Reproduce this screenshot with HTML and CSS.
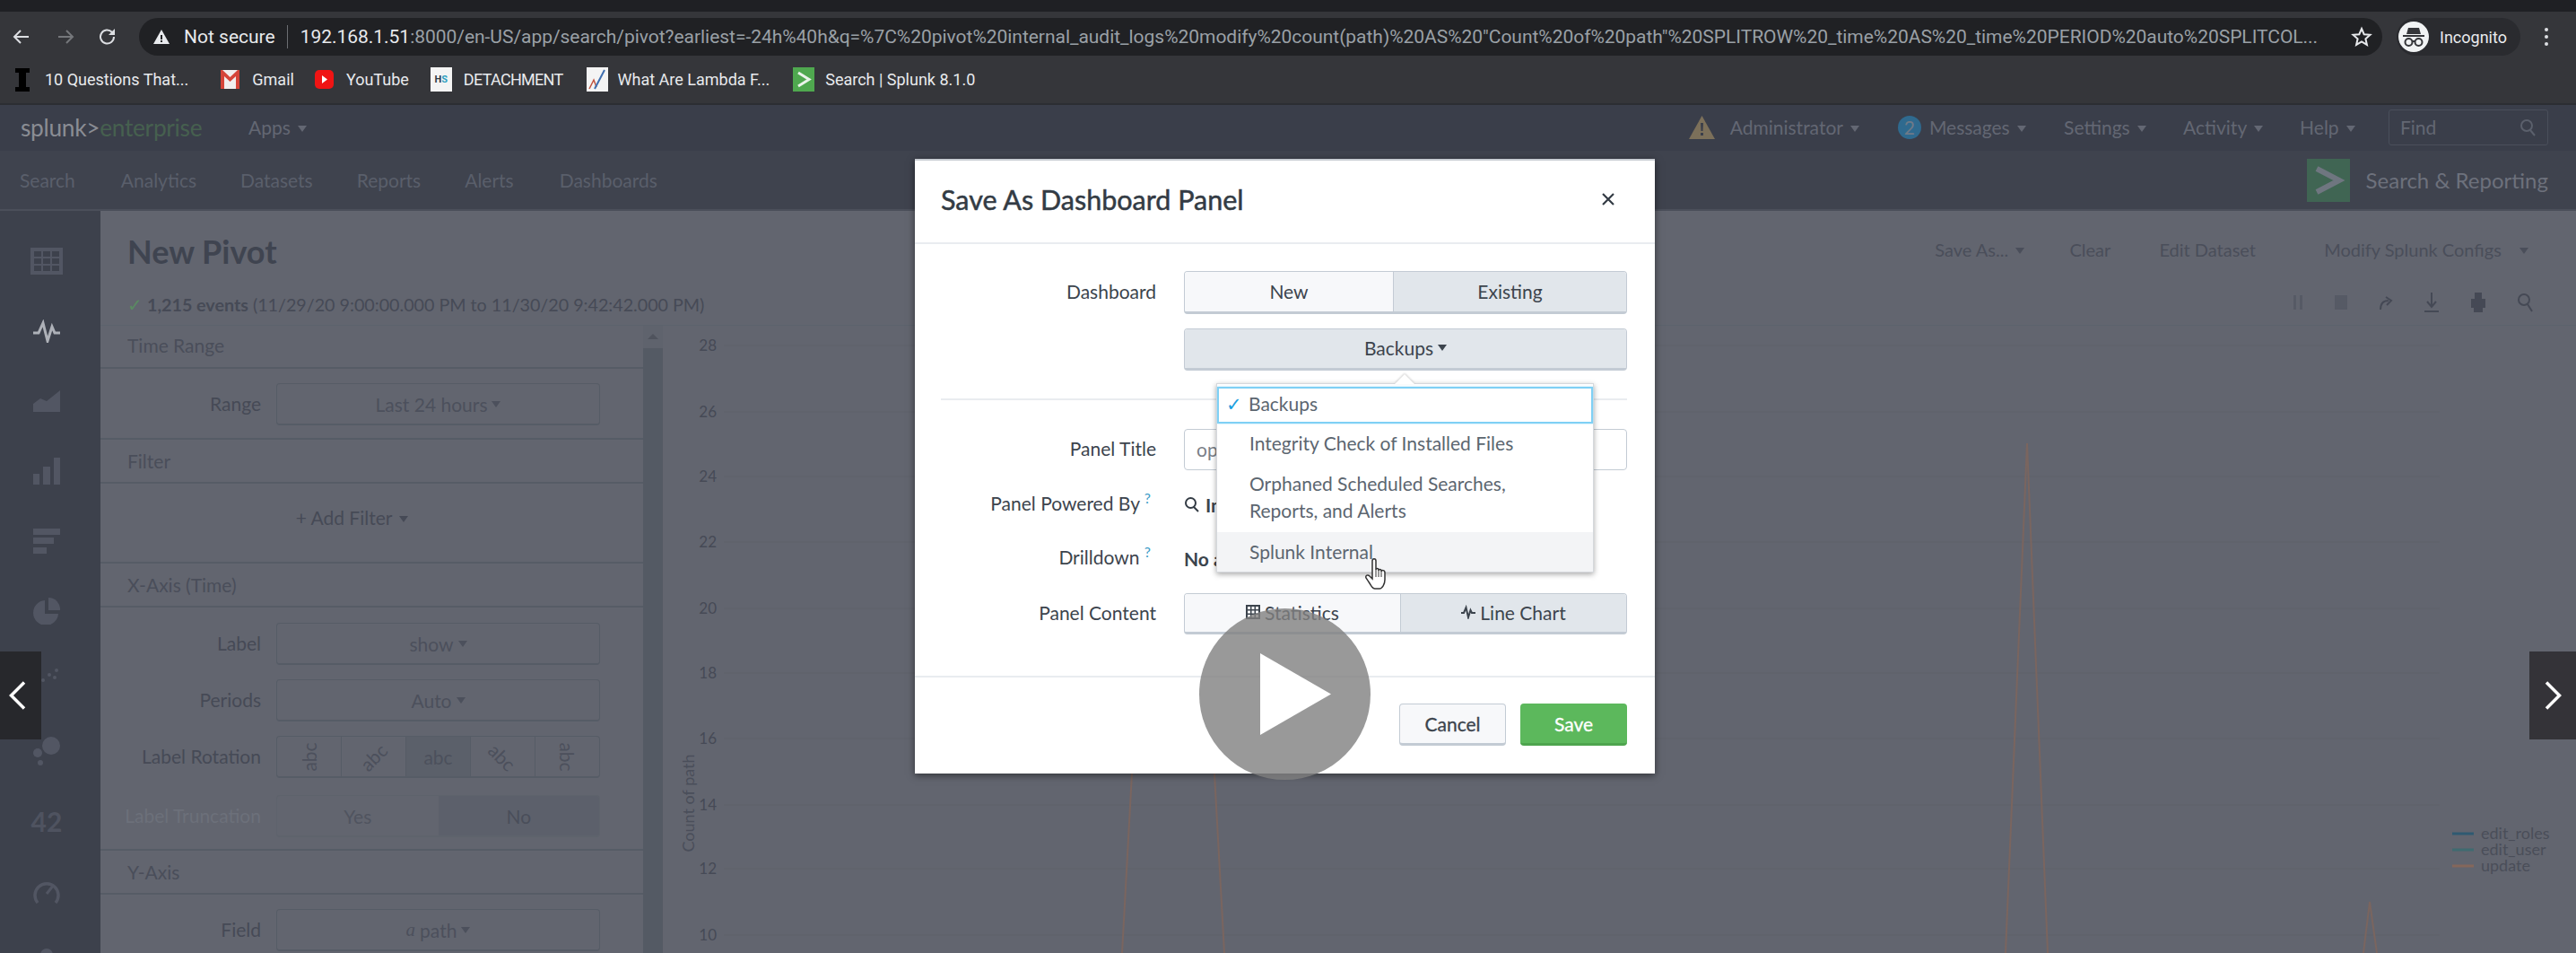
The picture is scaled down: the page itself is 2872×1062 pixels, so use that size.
FILE: index.html
```html
<!DOCTYPE html>
<html lang="en">
<head>
    <meta charset="UTF-8">
    <title>Save As Dashboard Panel</title>
    <link rel="stylesheet" href="styles.css">
</head>
<body>

    <div class="tabstrip"></div>

    <!-- Browser toolbar -->
    <div class="toolbar">
        <svg class="nav-btn" width="22" height="22" viewBox="0 0 22 22"><path d="M19 11H4M10 4l-7 7 7 7" fill="none" stroke="#dcdee2" stroke-width="2"/></svg>
        <svg class="nav-btn nav-forward" width="22" height="22" viewBox="0 0 22 22"><path d="M3 11h15M12 4l7 7-7 7" fill="none" stroke="#75777b" stroke-width="2"/></svg>
        <svg class="nav-btn nav-reload" width="22" height="22" viewBox="0 0 22 22"><path d="M18 11a7.5 7.5 0 1 1-2.2-5.3L18 8" fill="none" stroke="#dcdee2" stroke-width="2"/><path d="M19 2v7h-7z" fill="#dcdee2"/></svg>
        <div class="omnibox">
            <svg width="20" height="18" viewBox="0 0 20 18"><path d="M10 1l9 16H1z" fill="#e8eaed"/><path d="M9 7h2v5H9zM9 13h2v2H9z" fill="#202124"/></svg>
            <span class="not-secure">Not secure</span>
            <span class="url"><b>192.168.1.51</b>:8000/en-US/app/search/pivot?earliest=-24h%40h&amp;q=%7C%20pivot%20internal_audit_logs%20modify%20count(path)%20AS%20"Count%20of%20path"%20SPLITROW%20_time%20AS%20_time%20PERIOD%20auto%20SPLITCOL...</span>
            <svg class="star" width="24" height="24" viewBox="0 0 24 24"><path d="M12 3l2.7 6.2 6.8.6-5.1 4.5 1.5 6.6-5.9-3.5-5.9 3.5 1.5-6.6-5.1-4.5 6.8-.6z" fill="none" stroke="#e8eaed" stroke-width="2"/></svg>
        </div>
        <div class="profile">
            <svg width="34" height="34" viewBox="0 0 34 34"><circle cx="17" cy="17" r="17" fill="#f1f3f4"/><path d="M11 7h12l2 7H9z" fill="#35363a"/><path d="M5 15h24v2H5z" fill="#35363a"/><circle cx="11.5" cy="23" r="4" fill="none" stroke="#35363a" stroke-width="2"/><circle cx="22.5" cy="23" r="4" fill="none" stroke="#35363a" stroke-width="2"/><path d="M15 22h4" stroke="#35363a" stroke-width="2"/></svg>
            <span>Incognito</span>
        </div>
        <div class="kebab"><i></i><i></i><i></i></div>
    </div>

    <!-- Bookmarks -->
    <div class="bookmarks">
        <a class="bookmark bm-first"><svg width="16" height="26" viewBox="0 0 16 26"><path d="M0 0h16v5h-4v16h4v5H0v-5h4V5H0z" fill="#000"/></svg>10 Questions That...</a>
        <a class="bookmark bm-gmail"><svg width="21" height="25" viewBox="0 0 21 25"><path d="M0 2h21v21H0z" fill="#f1eeee"/><path d="M0 2v21h4V9l6.500 6L17 9v14h4V2h-2l-8.500 8L2 2z" fill="#d5453a"/></svg>Gmail</a>
        <a class="bookmark bm-youtube"><svg width="21" height="25" viewBox="0 0 21 25"><rect y="2" width="21" height="21" rx="5" fill="#f01414"/><path d="M8 8l6 4.500-6 4.500z" fill="#fff"/></svg>YouTube</a>
        <a class="bookmark bm-hs"><span class="hs-icon">H<em>S</em></span><span class="bm-narrow">DETACHMENT</span></a>
        <a class="bookmark bm-lambda"><svg width="24" height="27" viewBox="0 0 24 27"><path d="M0 0h24v27H0z" fill="#f4f4f4"/><path d="M3 24l5-10 3 8" fill="none" stroke="#c0533f" stroke-width="1.500"/><path d="M9 24L20 3" fill="none" stroke="#3f6fb0" stroke-width="2"/></svg>What Are Lambda F...</a>
        <a class="bookmark bm-search"><svg width="24" height="27" viewBox="0 0 24 27"><path d="M0 0h24v27H0z" fill="#4fa84f"/><path d="M6 6l12 7.500L6 21" fill="none" stroke="#eaf3ea" stroke-width="3"/></svg>Search | Splunk 8.1.0</a>
    </div>

    <!-- Splunk bar -->
    <div class="splunk-bar">
        <span class="logo">splunk&gt;<em>enterprise</em></span>
        <a class="apps">Apps <i class="caret"></i></a>
        <div class="splunk-right">
            <svg class="warn" width="29" height="26" viewBox="0 0 29 26"><path d="M14.500 0L29 26H0z" fill="#7c705a"/><path d="M13 8h3l-.5 9h-2zM13 19h3v3h-3z" fill="#3a3e4a"/></svg>
            <a class="bar-link link-admin">Administrator <i class="caret"></i></a>
            <span class="badge">2</span>
            <a class="bar-link link-messages">Messages <i class="caret"></i></a>
            <a class="bar-link link-settings">Settings <i class="caret"></i></a>
            <a class="bar-link link-activity">Activity <i class="caret"></i></a>
            <a class="bar-link link-help">Help <i class="caret"></i></a>
            <div class="find">
                <span>Find</span>
                <svg width="20" height="20" viewBox="0 0 20 20"><circle cx="8" cy="8" r="6" fill="none" stroke="#5b606c" stroke-width="2"/><path d="M12 13l5 6" stroke="#5b606c" stroke-width="2"/></svg>
            </div>
        </div>
    </div>

    <!-- App bar -->
    <div class="app-bar">
        <a class="tab tab-search">Search</a>
        <a class="tab tab-analytics">Analytics</a>
        <a class="tab tab-datasets">Datasets</a>
        <a class="tab tab-reports">Reports</a>
        <a class="tab tab-alerts">Alerts</a>
        <a class="tab">Dashboards</a>
        <div class="app-name">
            <svg width="48" height="48" viewBox="0 0 48 48"><path d="M0 0h48v48H0z" fill="#406553"/><path d="M11 11l25 13-25 13" fill="none" stroke="#6f7680" stroke-width="6"/></svg>
            <span>Search &amp; Reporting</span>
        </div>
    </div>

    <div class="main">
        <!-- Chart type sidebar -->
        <div class="sidebar">
            <div class="side-item"><svg width="36" height="30" viewBox="0 0 36 30"><path fill-rule="evenodd" d="M0 0h36v30H0zM4 4v6h8V4zm10 0v6h8V4zm10 0v6h8V4zM4 12v6h8v-6zm10 0v6h8v-6zm10 0v6h8v-6zM4 20v6h8v-6zm10 0v6h8v-6zm10 0v6h8v-6z" fill="#525663"/></svg></div>
            <div class="side-item"><svg width="32" height="26" viewBox="0 0 32 26"><path d="M1 15h6l5-11 5 20 5-16 3 7h6" fill="none" stroke="#aeb1b8" stroke-width="3"/></svg></div>
            <div class="side-item"><svg width="30" height="24" viewBox="0 0 30 24"><path d="M0 24V15l8-6 7 3L30 0v24z" fill="#525663"/></svg></div>
            <div class="side-item"><svg width="30" height="30" viewBox="0 0 30 30"><path d="M0 18h7v12H0zM11 10h8v20h-8zM23 0h7v30h-7z" fill="#525663"/></svg></div>
            <div class="side-item"><svg width="30" height="28" viewBox="0 0 30 28"><path d="M0 0h30v7H0zM0 10h23v7H0zM0 21h15v7H0z" fill="#525663"/></svg></div>
            <div class="side-item"><svg width="30" height="30" viewBox="0 0 30 30"><path d="M13 3v15h15A14 14 0 1 1 13 3z" fill="#525663"/><path d="M17 0a13 13 0 0 1 13 14H17z" fill="#525663"/></svg></div>
            <div class="side-item"><svg width="30" height="30" viewBox="0 0 30 30"><g fill="#525663"><circle cx="11" cy="14" r="2"/><circle cx="18" cy="8" r="2"/><circle cx="26" cy="3" r="2"/><circle cx="24" cy="11" r="2"/><circle cx="5" cy="22" r="2"/></g></svg></div>
            <div class="side-item"><svg width="30" height="32" viewBox="0 0 30 32"><g fill="#525663"><circle cx="20" cy="10" r="10"/><circle cx="5" cy="18" r="5"/><circle cx="8" cy="29" r="3"/></g></svg></div>
            <div class="side-item side-num">42</div>
            <div class="side-item"><svg width="30" height="28" viewBox="0 0 30 28"><path d="M5 27A13 13 0 1 1 25 27" fill="none" stroke="#525663" stroke-width="3.500"/><path d="M15 17l8-10" stroke="#525663" stroke-width="3"/></svg></div>
            <div class="side-item"><svg width="30" height="30" viewBox="0 0 30 30"><circle cx="15" cy="8" r="7" fill="#525663"/></svg></div>
        </div>

        <div class="content">
            <!-- Title row -->
            <div class="page-head">
                <h1>New Pivot</h1>
                <div class="head-actions">
                    <a class="act-save">Save As... <i class="caret"></i></a>
                    <a class="act-clear">Clear</a>
                    <a class="act-edit">Edit Dataset</a>
                    <a>Modify Splunk Configs <i class="caret caret-far"></i></a>
                </div>
            </div>
            <div class="status-row">
                <div class="events"><span class="tick">✓</span> <b>1,215 events</b> (11/29/20 9:00:00.000 PM to 11/30/20 9:42:42.000 PM)</div>
                <div class="job-icons">
                    <svg width="12" height="20" viewBox="0 0 12 20"><path d="M1 2h3v16H1zM8 2h3v16H8z" fill="#565a65"/></svg>
                    <svg width="16" height="20" viewBox="0 0 16 20"><path d="M1 2h14v16H1z" fill="#565a65"/></svg>
                    <svg width="16" height="20" viewBox="0 0 16 20"><path d="M2 18c0-7 3-10 9-10M8 4l6 4-5 5" fill="none" stroke="#454955" stroke-width="2"/></svg>
                    <svg width="18" height="24" viewBox="0 0 18 24"><path d="M9 1v15M4 11l5 6 5-6M1 22h16" fill="none" stroke="#454955" stroke-width="2"/></svg>
                    <svg width="18" height="24" viewBox="0 0 18 24"><path d="M5 1h8v7h4v10h-3v5H4v-5H1V8h4z" fill="#454955"/></svg>
                    <svg width="18" height="24" viewBox="0 0 18 24"><circle cx="8" cy="9" r="6" fill="none" stroke="#454955" stroke-width="2"/><path d="M12 14l5 8" stroke="#454955" stroke-width="2"/></svg>
                </div>
            </div>

            <div class="workspace">
                <!-- Settings panel -->
                <div class="panel">
                    <div class="section-title title-first">Time Range</div>
                    <div class="section-body">
                        <div class="field"><label>Range</label><div class="select">Last 24 hours <i class="caret"></i></div></div>
                    </div>
                    <div class="section-title">Filter</div>
                    <div class="section-body body-filter"><a>+ Add Filter <i class="caret"></i></a></div>
                    <div class="section-title">X-Axis (Time)</div>
                    <div class="section-body body-x">
                        <div class="field"><label>Label</label><div class="select">show <i class="caret"></i></div></div>
                        <div class="field"><label>Periods</label><div class="select">Auto <i class="caret"></i></div></div>
                        <div class="field">
                            <label>Label Rotation</label>
                            <div class="select rotation">
                                <span><i class="rot-m90">abc</i></span>
                                <span><i class="rot-m45">abc</i></span>
                                <span class="rot-on"><i>abc</i></span>
                                <span><i class="rot-45">abc</i></span>
                                <span><i class="rot-90">abc</i></span>
                            </div>
                        </div>
                        <div class="field field-off">
                            <label>Label Truncation</label>
                            <div class="select truncation"><span>Yes</span><span class="trunc-on">No</span></div>
                        </div>
                    </div>
                    <div class="section-title">Y-Axis</div>
                    <div class="section-body">
                        <div class="field"><label>Field</label><div class="select"><em class="type-a">a</em> path <i class="caret"></i></div></div>
                    </div>
                </div>
                <div class="scrollbar"><div class="scroll-up"><i></i></div><div class="scroll-track"></div></div>

                <!-- Chart -->
                <svg class="chart" viewBox="739 362 2133 700">
                    <g stroke="#5e626b" stroke-width="1">
                        <path d="M807 385H2720M807 459H2720M807 531H2720M807 604H2720M807 678H2720M807 750H2720M807 823H2720M807 897H2720M807 968H2720M807 1042H2720"/>
                    </g>
                    <g class="chart-tick" text-anchor="end">
                        <text x="799" y="391">28</text><text x="799" y="465">26</text><text x="799" y="537">24</text><text x="799" y="610">22</text><text x="799" y="684">20</text>
                        <text x="799" y="756">18</text><text x="799" y="829">16</text><text x="799" y="903">14</text><text x="799" y="974">12</text><text x="799" y="1048">10</text>
                    </g>
                    <text class="chart-axis" text-anchor="middle" transform="translate(774 895) rotate(-90)">Count of path</text>
                    <g fill="none" stroke="#7a655f" stroke-width="2">
                        <path d="M1251 1062L1262 862M1365 1062L1354 862"/>
                        <path d="M2236 1062L2260 494L2283 1062"/>
                        <path d="M2635 1062L2642 1005L2650 1062"/>
                    </g>
                    <g stroke-width="3">
                        <path d="M2734 929h24" stroke="#2f5a72"/>
                        <path d="M2734 947h24" stroke="#3f6b70"/>
                        <path d="M2734 965h24" stroke="#84675b"/>
                    </g>
                    <g class="chart-legend">
                        <text x="2766" y="935">edit_roles</text><text x="2766" y="953">edit_user</text><text x="2766" y="971">update</text>
                    </g>
                </svg>
            </div>
        </div>
    </div>

    <!-- Modal -->
    <div class="modal">
        <div class="modal-head">
            <h2>Save As Dashboard Panel</h2>
            <svg width="16" height="16" viewBox="0 0 16 16"><path d="M2 2l12 12M14 2L2 14" stroke="#333b44" stroke-width="2.200"/></svg>
        </div>
        <div class="modal-body">
            <div class="form-row row-seg">
                <label>Dashboard</label>
                <div class="seg">
                    <span class="seg-off seg-new">New</span>
                    <span class="seg-on">Existing</span>
                </div>
            </div>
            <div class="form-row row-backups">
                <label></label>
                <div class="seg"><span class="seg-on">Backups <i class="caret"></i></span></div>
            </div>
            <div class="rule"></div>
            <div class="form-row row-title">
                <label>Panel Title</label>
                <div class="text-input">op</div>
            </div>
            <div class="form-row row-text">
                <label class="label-help">Panel Powered By <sup>?</sup></label>
                <div class="plain"><svg width="18" height="18" viewBox="0 0 18 18"><circle cx="7.500" cy="7.500" r="5.500" fill="none" stroke="#333b44" stroke-width="2"/><path d="M11 12l5 5" stroke="#333b44" stroke-width="2"/></svg><b>In</b></div>
            </div>
            <div class="form-row row-text">
                <label class="label-help">Drilldown <sup>?</sup></label>
                <div class="plain"><b>No a</b></div>
            </div>
            <div class="form-row row-content">
                <label>Panel Content</label>
                <div class="seg">
                    <span class="seg-off seg-stats"><svg width="16" height="16" viewBox="0 0 16 16"><path fill-rule="evenodd" d="M0 0h16v16H0zM2 2v3h3V2zm4.500 0v3h3V2zM11 2v3h3V2zM2 6.500v3h3v-3zm4.500 0v3h3v-3zm4.500 0v3h3v-3zM2 11v3h3v-3zm4.500 0v3h3v-3zm4.500 0v3h3v-3z" fill="#3c444d"/></svg>Statistics</span>
                    <span class="seg-on"><svg width="16" height="16" viewBox="0 0 16 16"><path d="M0 9h3l2.500-6 2.500 11 2.500-8 1.500 3h4" fill="none" stroke="#3c444d" stroke-width="2"/></svg>Line Chart</span>
                </div>
            </div>
        </div>
        <div class="modal-foot">
            <button class="btn btn-cancel">Cancel</button>
            <button class="btn btn-save">Save</button>
        </div>

        <!-- Dashboard dropdown -->
        <div class="dropdown">
            <div class="dropdown-arrow"></div>
            <div class="option option-focus"><span class="check">✓</span>Backups</div>
            <div class="option">Integrity Check of Installed Files</div>
            <div class="option option-two">Orphaned Scheduled Searches,<br>Reports, and Alerts</div>
            <div class="option option-hover">Splunk Internal</div>
        </div>
    </div>

    <!-- Mouse cursor -->
    <svg class="cursor" width="26" height="36" viewBox="0 0 26 36"><path d="M8 3c0-3 4-3 4 0v10c0-2 3-2 3 0v1c0-2 3-2 3 0v1c0-2 4-2 4 1v8c0 5-3 10-6 10h-5c-3 0-4-3-6-6l-4-6c-1-3 2-4 4-2l3 3z" fill="#fff" stroke="#333" stroke-width="1.500"/><path d="M12 13v8M15 14v7M18 15v6" stroke="#333" stroke-width="1"/></svg>

    <!-- Video player overlay -->
    <div class="play">
        <svg width="79" height="91" viewBox="0 0 79 91"><path d="M0 0l79 45.500L0 91z" fill="#fff"/></svg>
    </div>
    <div class="pager pager-left">
        <svg width="19" height="32" viewBox="0 0 19 32"><path d="M17 1.500L2.500 16 17 30.500" fill="none" stroke="#fff" stroke-width="3.500"/></svg>
    </div>
    <div class="pager pager-right">
        <svg width="19" height="32" viewBox="0 0 19 32"><path d="M2 1.500L16.500 16 2 30.500" fill="none" stroke="#fff" stroke-width="3.500"/></svg>
    </div>

</body>
</html>
```
FILE: styles.css
```css
* {
    box-sizing: border-box;
}

body {
    font-family: Lato, "Open Sans", sans-serif;
    margin: 0;
    width: 2872px;
    height: 1062px;
    overflow: hidden;
    background-color: #62656f;
    position: relative;
}

a {
    display: inline-block;
}

.caret {
    display: inline-block;
    width: 0;
    height: 0;
    margin-left: 3px;
    vertical-align: 3px;
    border-left: 5px solid transparent;
    border-right: 5px solid transparent;
    border-top: 7px solid currentColor;
}

/* Browser chrome */
.tabstrip {
    height: 13px;
    background-color: #1f2024;
}

.toolbar {
    height: 49px;
    padding-top: 7px;
    background-color: #35363a;
    display: flex;
    align-items: center;
}

.nav-btn {
    margin-left: 13px;
}

.nav-forward {
    margin-left: 27px;
}

.nav-reload {
    margin-left: 25px;
}

.omnibox {
    margin-left: 24px;
    width: 2501px;
    height: 42px;
    padding-left: 15px;
    background-color: #202124;
    border-radius: 21px;
    display: flex;
    align-items: center;
    color: #9aa0a6;
    font-family: Roboto, sans-serif;
    font-size: 21px;
}

.not-secure {
    margin-left: 15px;
    padding-right: 13px;
    border-right: 1px solid #6c6e72;
    line-height: 26px;
    color: #e8eaed;
}

.url {
    margin-left: 14px;
    width: 2265px;
    letter-spacing: -0.03px;
    white-space: nowrap;
    overflow: hidden;
}

.url b {
    font-weight: 400;
    color: #e8eaed;
}

.star {
    margin-left: 21px;
}

.profile {
    margin-left: 16px;
    width: 138px;
    height: 42px;
    padding-left: 2px;
    border-radius: 21px;
    background-color: #2a2b2f;
    display: flex;
    align-items: center;
    font-family: Roboto, sans-serif;
    font-size: 18px;
    color: #e8eaed;
}

.profile span {
    margin-left: 12px;
}

.kebab {
    margin-left: 27px;
    display: flex;
    flex-direction: column;
    gap: 4px;
}

.kebab i {
    width: 4px;
    height: 4px;
    border-radius: 50%;
    background-color: #dcdee2;
}

.bookmarks {
    height: 55px;
    padding-left: 17px;
    background-color: #35363a;
    border-bottom: 2px solid #2c2e33;
    display: flex;
    align-items: center;
    font-family: Roboto, sans-serif;
    font-size: 18px;
    color: #e8eaed;
}

.bookmark {
    display: flex;
    align-items: center;
    white-space: nowrap;
}

.bookmark svg {
    margin-right: 14px;
}

.bm-first svg {
    margin-right: 17px;
}

.bm-gmail {
    margin-left: 36px;
}

.bm-youtube {
    margin-left: 23px;
}

.bm-hs {
    margin-left: 24px;
}

.bm-narrow {
    letter-spacing: -0.7px;
}

.bm-lambda {
    margin-left: 26px;
}

.bm-lambda svg {
    margin-right: 11px;
}

.bm-search {
    margin-left: 26px;
}

.bm-search svg {
    margin-right: 12px;
}

.hs-icon {
    width: 24px;
    height: 27px;
    margin-right: 13px;
    background-color: #f4f4f4;
    color: #2d3a45;
    font-size: 11px;
    font-weight: 700;
    text-align: center;
    line-height: 27px;
}

.hs-icon em {
    font-style: normal;
    color: #2f9fc0;
}

/* Splunk bars */
.splunk-bar {
    height: 51px;
    padding: 0 0 2px 23px;
    background-color: #3a3e4a;
    display: flex;
    align-items: center;
    color: #636773;
    font-size: 21px;
}

.logo {
    width: 254px;
    font-size: 26.300px;
    color: #8a8d94;
    letter-spacing: -0.3px;
}

.logo em {
    font-style: normal;
    color: #46604f;
}

.splunk-right {
    margin-left: auto;
    margin-right: 31px;
    display: flex;
    align-items: center;
}

.warn {
    margin-right: 17px;
}

.link-admin {
    margin-right: 43px;
}

.badge {
    width: 26px;
    height: 26px;
    margin-right: 9px;
    border-radius: 50%;
    background-color: #2f6a8f;
    color: #6f7a88;
    text-align: center;
    line-height: 26px;
}

.link-messages {
    margin-right: 42px;
}

.link-settings {
    margin-right: 41px;
}

.link-activity {
    margin-right: 41px;
}

.link-help {
    margin-right: 37px;
}

.find {
    width: 178px;
    height: 40px;
    padding: 0 11px 0 12px;
    border: 1px solid #4a4f5b;
    border-radius: 3px;
    display: flex;
    align-items: center;
    justify-content: space-between;
}

.app-bar {
    height: 67px;
    padding-left: 22px;
    background-color: #3f434e;
    border-bottom: 2px solid #4b4f5a;
    display: flex;
    align-items: center;
    color: #5a5f6b;
    font-size: 21px;
}

.tab-search {
    margin-right: 51px;
}

.tab-analytics {
    margin-right: 49px;
}

.tab-datasets {
    margin-right: 49px;
}

.tab-reports {
    margin-right: 49px;
}

.tab-alerts {
    margin-right: 51px;
}

.app-name {
    margin-left: auto;
    margin-right: 31px;
    display: flex;
    align-items: center;
    gap: 18px;
    font-size: 24px;
    color: #6d717c;
}

/* Page layout */
.main {
    display: flex;
    height: 827px;
}

.sidebar {
    width: 112px;
    flex: none;
    padding: 17px 8px 0 0;
    background-color: #3d414c;
    overflow: hidden;
}

.side-item {
    height: 78px;
    flex: none;
    display: flex;
    align-items: center;
    justify-content: center;
}

.side-num {
    color: #4f5360;
    font-size: 30px;
    font-weight: 700;
}

.content {
    flex: 1;
    min-width: 0;
    color: #464a56;
}

.page-head {
    height: 76px;
    padding: 0 53px 0 30px;
    display: flex;
    align-items: center;
    justify-content: space-between;
}

.page-head h1 {
    margin: 0;
    padding-top: 13px;
    font-size: 36px;
    font-weight: 700;
    color: #3f4450;
}

.head-actions {
    padding-top: 9px;
    font-size: 20px;
    color: #4a4e5a;
}

.act-save {
    margin-right: 45px;
}

.act-clear {
    margin-right: 49px;
}

.act-edit {
    margin-right: 71px;
}

.caret-far {
    margin-left: 15px;
}

.status-row {
    height: 51px;
    padding: 0 48px 0 30px;
    display: flex;
    align-items: center;
    justify-content: space-between;
    font-size: 19.700px;
}

.events {
    padding-top: 6px;
}

.events b {
    font-weight: 700;
}

.tick {
    color: #5a8a62;
}

.job-icons {
    display: flex;
    align-items: center;
    gap: 34px;
}

.workspace {
    display: flex;
    height: 700px;
    border-top: 1px solid #5c626c;
}

.panel {
    width: 605px;
    flex: none;
}

.section-title {
    height: 49px;
    padding: 11px 0 0 30px;
    font-size: 21px;
    color: #4a4e5a;
    border-bottom: 2px solid #565c66;
}

.title-first {
    height: 48px;
    padding-top: 9px;
}

.section-body {
    padding: 16px 0 14px;
    border-bottom: 2px solid #565c66;
}

.section-body:last-child {
    border-bottom: none;
}

.body-filter {
    height: 89px;
    padding-top: 25px;
    text-align: center;
    font-size: 21px;
    padding-right: 44px;
}

.body-x {
    padding: 17px 0 13px;
}

.field {
    height: 47px;
    margin-bottom: 16px;
    display: flex;
    align-items: center;
    font-size: 21px;
    color: #4c505c;
}

.field:last-child {
    margin-bottom: 0;
}

.field label {
    width: 179px;
    margin-right: 17px;
    padding-bottom: 3px;
    text-align: right;
    white-space: nowrap;
    color: #464a56;
}

.select {
    width: 361px;
    height: 47px;
    border: 1px solid #565c66;
    border-bottom-width: 2px;
    border-radius: 4px;
    display: flex;
    align-items: center;
    justify-content: center;
    gap: 5px;
}

.select .caret {
    margin-left: 0;
    vertical-align: 0;
}

.rotation,
.truncation {
    overflow: hidden;
}

.rotation span {
    height: 100%;
    flex: 1;
    border-right: 1px solid #565c66;
    display: flex;
    align-items: center;
    justify-content: center;
}

.rotation {
    gap: 0;
}

.rotation span:last-child {
    border-right: none;
}

.rotation i {
    display: block;
    font-style: normal;
    font-size: 21px;
}

.rot-m90 {
    transform: rotate(-90deg);
}

.rot-m45 {
    transform: rotate(-45deg);
}

.rot-45 {
    transform: rotate(45deg);
}

.rot-90 {
    transform: rotate(90deg);
}

.rot-on {
    background-color: #5b606a;
}

.field-off {
    margin-top: 19px;
    color: #50545f;
}

.field-off label {
    color: #6c707a;
}

.truncation {
    gap: 0;
    border-color: #5e636c;
}

.truncation span {
    flex: 1;
    height: 100%;
    display: flex;
    align-items: center;
    justify-content: center;
}

.trunc-on {
    background-color: #5c606b;
    color: #4a4e5a;
}

.type-a {
    font-family: "Liberation Serif", serif;
}

.scrollbar {
    width: 22px;
    flex: none;
    background-color: #5f636d;
}

.scroll-up {
    height: 25px;
    padding-top: 9px;
    display: flex;
    justify-content: center;
}

.scroll-up i {
    width: 0;
    height: 0;
    border-left: 6px solid transparent;
    border-right: 6px solid transparent;
    border-bottom: 6px solid #4f535d;
}

.scroll-track {
    height: 100%;
    background-color: #545a64;
}

.chart {
    width: 2133px;
    height: 700px;
    flex: none;
    margin-top: -1px;
}

.chart-tick {
    font-family: Lato, sans-serif;
    font-size: 17px;
    fill: #464a56;
}

.chart-axis {
    font-family: Lato, sans-serif;
    font-size: 18px;
    fill: #4a4e5a;
}

.chart-legend {
    font-family: Lato, sans-serif;
    font-size: 18px;
    fill: #4a4e59;
}

/* Modal */
.modal {
    position: absolute;
    left: 1020px;
    top: 177px;
    width: 825px;
    height: 685px;
    background-color: #fff;
    border-top: 2px solid #c8ccd2;
    box-shadow: 0 2px 8px rgba(0, 0, 0, 0.5);
    color: #3c444d;
    font-size: 21px;
}

.modal-head {
    height: 93px;
    padding: 0 44px 5px 29px;
    border-bottom: 2px solid #e9ecf0;
    display: flex;
    align-items: center;
    justify-content: space-between;
}

.modal-head h2 {
    margin: 0;
    font-size: 30.500px;
    font-weight: 400;
    -webkit-text-stroke: 0.5px #333b44;
    color: #333b44;
}

.modal-body {
    height: 483px;
    padding: 30px 31px 0 29px;
    border-bottom: 2px solid #e9ecf0;
}

.form-row {
    display: flex;
    align-items: center;
}

.form-row label {
    width: 240px;
    margin-right: 31px;
    padding-bottom: 3px;
    flex: none;
    text-align: right;
    white-space: nowrap;
}

.form-row .label-help {
    padding-right: 6px;
}

.form-row sup {
    font-size: 16px;
    color: #3b9cc7;
    line-height: 0;
}

.row-seg {
    height: 48px;
}

.row-backups {
    height: 47px;
    margin-top: 16px;
}

.rule {
    height: 2px;
    margin: 31px 0 32px;
    background-color: #e9ecf0;
}

.row-title {
    height: 46px;
}

.row-text {
    height: 40px;
    margin-top: 18px;
}

.row-text + .row-text {
    margin-top: 20px;
}

.row-content {
    height: 46px;
    margin-top: 19px;
}

.seg {
    width: 494px;
    height: 100%;
    border: 1px solid #c3cbd4;
    border-bottom-width: 3px;
    border-radius: 4px;
    overflow: hidden;
    display: flex;
}

.seg span {
    display: flex;
    align-items: center;
    justify-content: center;
    gap: 5px;
    padding-bottom: 2px;
}

.seg-on {
    flex: 1;
    background-color: #e1e6eb;
}

.seg-off {
    background-color: #f7f8fa;
    border-right: 1px solid #c3cbd4;
}

.seg-new {
    width: 233px;
}

.seg-stats {
    width: 241px;
}

.seg .caret {
    margin-left: 0;
    vertical-align: 0;
}

.text-input {
    width: 494px;
    height: 100%;
    padding: 0 13px 2px;
    border: 1px solid #c3cbd4;
    border-radius: 4px;
    display: flex;
    align-items: center;
    color: #7a8087;
}

.plain {
    display: flex;
    align-items: center;
    gap: 6px;
}

.plain b {
    font-weight: 700;
}

.modal-foot {
    padding: 29px 31px 0 0;
    display: flex;
    justify-content: flex-end;
    gap: 16px;
}

.btn {
    width: 119px;
    height: 47px;
    border-radius: 4px;
    font-family: Lato, sans-serif;
    font-size: 21px;
    font-weight: 400;
}

.btn-cancel {
    background-color: #f7f8fa;
    border: 1px solid #c3cbd4;
    border-bottom-width: 3px;
    color: #3c444d;
    -webkit-text-stroke: 0.3px #3c444d;
}

.btn-save {
    background-color: #5cb85c;
    border: none;
    border-bottom: 3px solid #4ea44e;
    color: #fff;
    -webkit-text-stroke: 0.3px #fff;
}

/* Dropdown over the form */
.dropdown {
    position: absolute;
    left: 336px;
    top: 248px;
    width: 421px;
    height: 211px;
    padding-top: 3px;
    background-color: #fff;
    border: 1px solid #d5d8dc;
    box-shadow: 0 2px 6px rgba(0, 0, 0, 0.35);
    color: #5c6670;
    font-size: 21px;
}

.dropdown-arrow {
    position: absolute;
    left: 198px;
    top: -11px;
    width: 0;
    height: 0;
    border-left: 11px solid transparent;
    border-right: 11px solid transparent;
    border-bottom: 11px solid #fff;
    filter: drop-shadow(0 -1px 1px rgba(0, 0, 0, 0.2));
}

.option {
    height: 45px;
    padding: 0 0 2px 36px;
    display: flex;
    align-items: center;
    white-space: nowrap;
}

.option-focus {
    height: 41px;
    padding: 0 0 4px 33px;
    position: relative;
    border: 2px solid #7fd0f5;
    box-shadow: 0 0 2px #a9e0f8;
}

.check {
    position: absolute;
    left: 8px;
    color: #1c9fe0;
}

.option-two {
    height: 76px;
    line-height: 30px;
}

.option-hover {
    height: 44px;
    background-color: #f3f4f6;
}

.cursor {
    position: absolute;
    left: 1522px;
    top: 622px;
}

/* Video player overlay */
.play {
    position: absolute;
    left: 1337px;
    top: 678px;
    width: 191px;
    height: 191px;
    padding-left: 68px;
    border-radius: 50%;
    background-color: rgba(128, 128, 128, 0.8);
    display: flex;
    align-items: center;
}

.pager {
    position: absolute;
    top: 726px;
    height: 98px;
    display: flex;
    align-items: center;
}

.pager-left {
    left: 0;
    width: 46px;
    padding-left: 10px;
    background-color: #27282c;
}

.pager-right {
    left: 2820px;
    width: 52px;
    padding-left: 17px;
    background-color: #343338;
}
```
